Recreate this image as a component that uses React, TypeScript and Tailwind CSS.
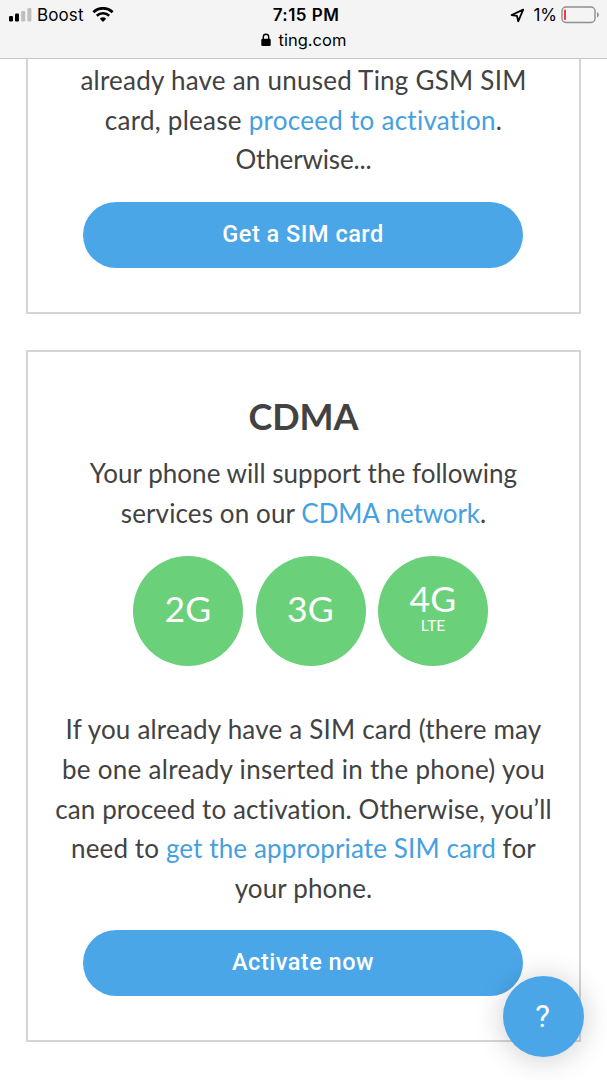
import type { ReactNode } from "react";

function Line({ className = "", children }: { className?: string; children: ReactNode }) {
  return <span className={`block h-[39.7px] whitespace-nowrap ${className}`}>{children}</span>;
}

function Link({ className = "", children }: { className?: string; children: ReactNode }) {
  return <a href="#" className={`text-[#45a0e0] ${className}`}>{children}</a>;
}

function PillButton({ children }: { children: ReactNode }) {
  return (
    <button className="mr-px h-[66px] w-[440px] rounded-full bg-[#4ba6e8] font-['Roboto',sans-serif] text-[23.5px] font-medium tracking-[0.5px] text-white">
      {children}
    </button>
  );
}

function Badge({ label, note }: { label: string; note?: string }) {
  return (
    <div className="flex size-[110px] flex-col items-center justify-center rounded-full bg-[#6ad079] pb-[5px] text-white">
      <span className={`text-[35.5px] tracking-[0.2px] ${note ? "h-[34px] leading-[34px]" : "leading-[36px]"}`}>{label}</span>
      {note && <span className="text-[15.5px] leading-[19px]">{note}</span>}
    </div>
  );
}

function StatusBar() {
  return (
    <header className="h-[59px] border-b border-[#c6c6c8] bg-[#f4f4f4] font-['Inter',sans-serif] text-black">
      <div className="grid h-[30px] grid-cols-3 items-center pl-2 pr-[7px]">
        <div className="flex items-center">
          <svg width="25" height="16" viewBox="0 0 25 16">
            <rect x="1" y="9" width="4" height="5.5" rx="1.2" />
            <rect x="7" y="6.5" width="4" height="8" rx="1.2" />
            <rect x="13.2" y="4" width="4" height="10.5" rx="1.2" fill="#bfbfbf" />
            <rect x="19.4" y="1" width="4" height="13.5" rx="1.2" fill="#bfbfbf" />
          </svg>
          <span className="ml-1 text-[17px] leading-5 tracking-[0.1px]">Boost</span>
          <svg className="ml-2" width="22" height="16" viewBox="0 0 22 16" fill="none" stroke="#000">
            <path d="M1.4 5.2a13.8 13.8 0 0 1 19.2 0" strokeWidth="2.8" />
            <path d="M4.8 8.8a9 9 0 0 1 12.4 0" strokeWidth="2.6" />
            <path d="M7.8 11.8a4.8 4.8 0 0 1 6.4 0L11 15Z" fill="#000" stroke="none" />
          </svg>
        </div>
        <div className="pl-1 text-center text-[17px] font-semibold leading-5 tracking-[0.45px]">7:15 PM</div>
        <div className="flex items-center justify-end">
          <svg width="15" height="15" viewBox="0 0 15 15" fill="none" stroke="#000" strokeWidth="1.8" strokeLinejoin="round">
            <path d="M13.2 1.6 1.6 7l5.4.9 1.2 5.4Z" />
          </svg>
          <span className="ml-[8px] text-[17px] leading-5">1%</span>
          <svg className="ml-[4px]" width="39" height="18" viewBox="0 0 39 18">
            <rect x="1" y="1" width="33" height="15.5" rx="4" fill="none" stroke="#8e8e8e" strokeWidth="1.4" />
            <rect x="3" y="3.5" width="2" height="10.5" rx="0.8" fill="#ee3b3b" />
            <path d="M36 6.2c2.4 1 2.4 4.2 0 5.2Z" fill="#8e8e8e" />
          </svg>
        </div>
      </div>
      <div className="flex h-5 items-center justify-center">
        <svg width="10" height="14" viewBox="0 0 10 14">
          <path d="M2.3 6V4a2.7 2.7 0 0 1 5.4 0v2" fill="none" stroke="#000" strokeWidth="1.4" />
          <rect x="0.3" y="5.8" width="9.4" height="7.2" rx="1.2" />
        </svg>
        <span className="ml-2 text-[16.5px] leading-5">ting.com</span>
      </div>
    </header>
  );
}

export default function App() {
  return (
    <div className="relative h-[1080px] w-[607px] overflow-hidden bg-white font-['Lato',sans-serif] text-[26px] leading-[39.7px] text-[#424242]">
      <StatusBar />
      <main className="flex flex-col gap-9 px-[26px]">
        <section className="flex h-[255px] flex-col items-center border-2 border-t-0 border-[#d4d6d6] pt-0.5">
          <p className="text-center">
            <Line className="tracking-[0.24px]">already have an unused Ting GSM SIM</Line>
            <Line className="tracking-[0.27px]">card, please <Link>proceed to activation</Link>.</Line>
            <Line className="tracking-[-0.15px]">Otherwise...</Line>
          </p>
          <div className="mt-[22px] flex">
            <PillButton>Get a SIM card</PillButton>
          </div>
        </section>

        <section className="flex h-[692px] flex-col items-center border-2 border-[#d4d6d6] pt-[43px]">
          <h2 className="h-[59px] text-[36px] font-bold leading-[42px]">CDMA</h2>
          <p className="text-center">
            <Line className="tracking-[0.03px]">Your phone will support the following</Line>
            <Line className="tracking-[0.12px]">services on our <Link className="tracking-[-0.1px]">CDMA network</Link>.</Line>
          </p>
          <div className="ml-[14px] mt-[23px] flex gap-[12.5px]">
            <Badge label="2G" />
            <Badge label="3G" />
            <Badge label="4G" note="LTE" />
          </div>
          <p className="mt-[44px] text-center">
            <Line className="tracking-[0.2px]">If you already have a SIM card (there may</Line>
            <Line className="tracking-[0.3px]">be one already inserted in the phone) you</Line>
            <Line className="tracking-[0.1px]">can proceed to activation. Otherwise, you’ll</Line>
            <Line className="tracking-[0.12px]">need to <Link>get the appropriate SIM card</Link> for</Line>
            <Line className="tracking-[0.15px]">your phone.</Line>
          </p>
          <div className="mt-[21px] flex">
            <PillButton>Activate now</PillButton>
          </div>
        </section>
      </main>
      <button className="absolute left-[503px] top-[976px] flex size-[81px] items-center justify-center rounded-full bg-[#4ba6e8] pr-[2px] font-['Roboto',sans-serif] text-[31px] text-white shadow-[0_2px_30px_rgba(0,0,0,0.2)]">
        ?
      </button>
    </div>
  );
}
